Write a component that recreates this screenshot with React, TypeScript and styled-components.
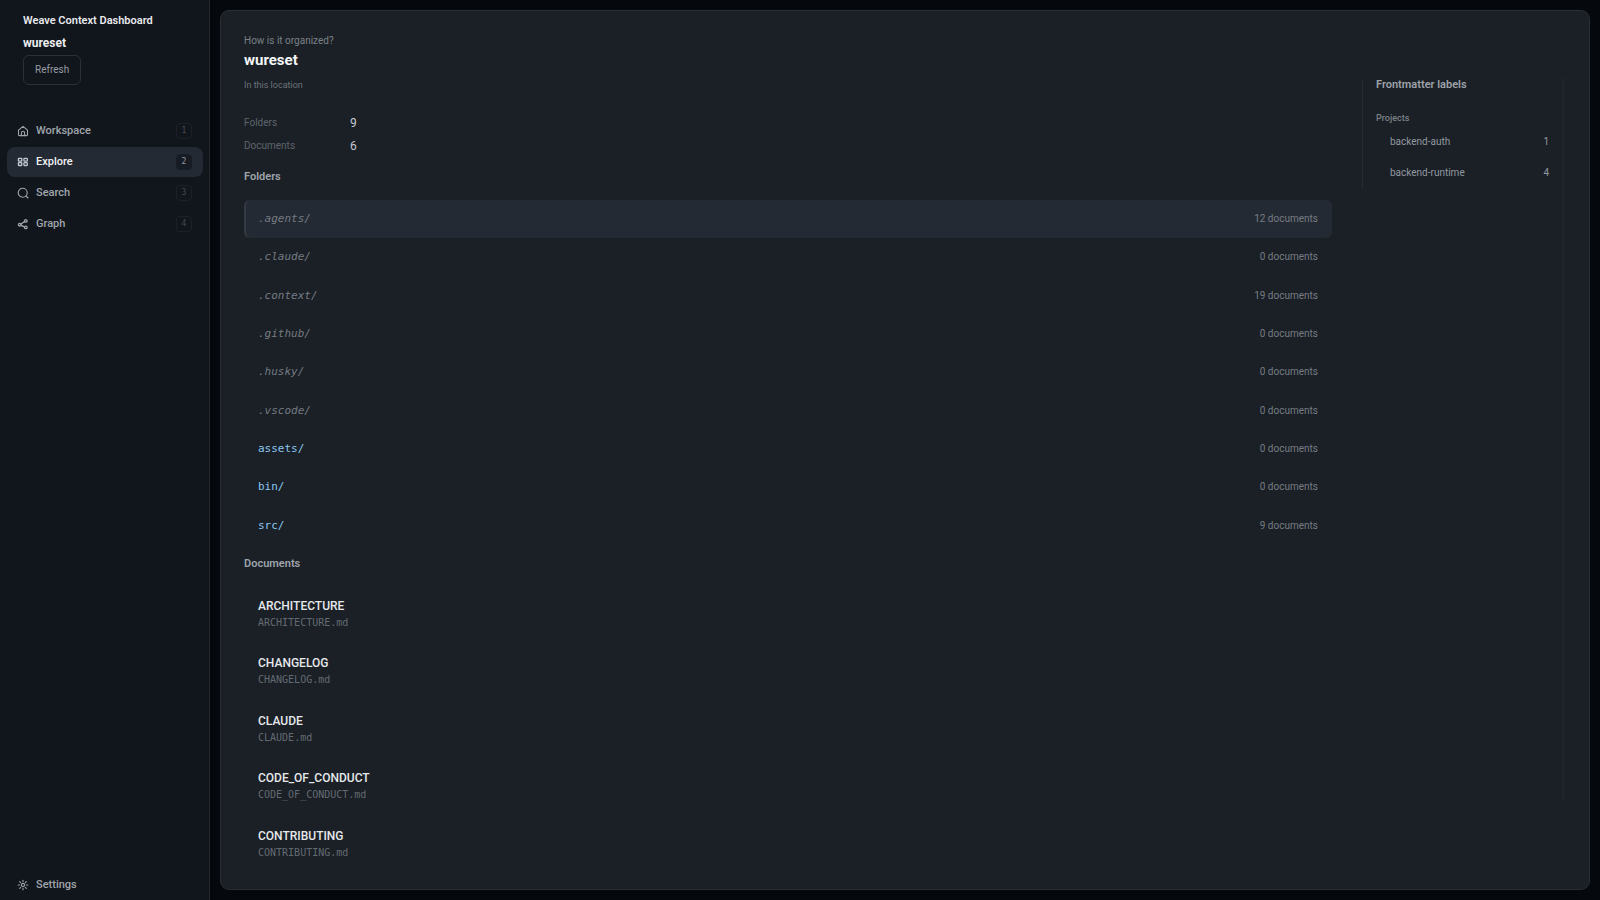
import React from "react";
import styled, { createGlobalStyle, css } from "styled-components";

const sans = `Roboto, "Liberation Sans", sans-serif`;
const mono = `"DejaVu Sans Mono", monospace`;

const GlobalStyle = createGlobalStyle`
  * { box-sizing: border-box; }
  body { margin: 0; background: #05080d; color: #a0a5ac; font-family: ${sans}; font-size: 12px; line-height: 16px; }
  h1, h2, h3, p, ul, dl, dd { margin: 0; padding: 0; }
  ul { list-style: none; }
  a { color: inherit; text-decoration: none; }
  button { font: inherit; cursor: pointer; }
`;

const Shell = styled.div`
  display: grid;
  grid-template-columns: 210px minmax(0, 1fr);
  height: 100vh;
`;

const Sidebar = styled.aside`
  display: flex;
  flex-direction: column;
  background: #11151c;
  border-right: 1px solid #24272c;
  padding: 13px 6px 0 7px;
`;

const Brand = styled.header`
  padding: 0 16px;
`;

const BrandTitle = styled.p`
  font-size: 11px;
  line-height: 16px;
  font-weight: 600;
  color: #e8eaed;
  white-space: nowrap;
`;

const Project = styled.p`
  margin: 6px 0 4px;
  font-size: 12px;
  line-height: 16px;
  font-weight: 700;
  color: #eceef1;
`;

const RefreshButton = styled.button`
  display: block;
  height: 30px;
  padding: 0 11px;
  border: 1px solid #2c3138;
  border-radius: 6px;
  background: transparent;
  color: #989ca3;
  font-size: 10px;
`;

const Nav = styled.nav`
  display: grid;
  grid-auto-rows: 30px;
  row-gap: 1px;
  margin-top: 31px;
`;

const NavLink = styled.a<{ $active?: boolean }>`
  display: flex;
  align-items: center;
  height: 30px;
  padding: 0 11px 0 10px;
  gap: 7px;
  border-radius: 8px;
  font-size: 11px;
  font-weight: 500;
  ${(p) => p.$active && css`
    background: #232a33;
    color: #f0f2f5;
    svg { color: #c3c8d0; }
  `}
`;

const Key = styled.kbd<{ $active?: boolean }>`
  margin-left: auto;
  width: 16px;
  height: 16px;
  border: 1px solid #1d2127;
  border-radius: 4px;
  font: 8px/14px ${mono};
  text-align: center;
  color: #454a52;
  ${(p) => p.$active && css`
    background: #171c24;
    border-color: #171c24;
    color: #9196a0;
  `}
`;

const SidebarFooter = styled.div`
  margin-top: auto;
`;

const Panel = styled.main`
  margin: 10px;
  padding: 23px 24px 0 23px;
  background: #1a2026;
  border: 1px solid #2a2e34;
  border-radius: 9px;
  overflow: hidden;
`;

const Eyebrow = styled.p`
  font-size: 10px;
  line-height: 14px;
  color: #7b8087;
`;

const Title = styled.h1`
  margin: 2px 0 8px;
  font-size: 15px;
  line-height: 20px;
  font-weight: 700;
  color: #f4f5f7;
`;

const Columns = styled.div`
  display: grid;
  grid-template-columns: minmax(0, 1fr) 203px;
  column-gap: 30px;
`;

const Caption = styled.p`
  font-size: 9px;
  line-height: 14px;
  color: #6d727a;
`;

const Stats = styled.dl`
  display: grid;
  grid-template-columns: 106px 1fr;
  row-gap: 7px;
  margin-top: 23px;
  line-height: 16px;
  dt { font-size: 10px; color: #5f646c; }
  dd { font-size: 12px; color: #c5c9cf; }
`;

const SectionTitle = styled.h2`
  font-size: 11px;
  line-height: 16px;
  font-weight: 600;
  color: #9ea3aa;
`;

const FoldersTitle = styled(SectionTitle)`
  margin: 15px 0;
`;

const DocumentsTitle = styled(SectionTitle)`
  margin: 11px 0 26px;
`;

const FolderList = styled.ul`
  display: grid;
  grid-auto-rows: 1fr;
  min-height: 345px;
`;

const FolderItem = styled.li`
  display: grid;
`;

const FolderLink = styled.a<{ $selected?: boolean }>`
  display: flex;
  align-items: center;
  justify-content: space-between;
  padding: 0 14px 0 12px;
  border-left: 2px solid transparent;
  border-radius: 6px;
  ${(p) => p.$selected && css`
    background: #242a33;
    border-left-color: #343a43;
  `}
`;

const FolderName = styled.span<{ $hidden: boolean }>`
  font-family: ${mono};
  font-size: 11px;
  font-style: ${(p) => (p.$hidden ? "italic" : "normal")};
  color: ${(p) => (p.$hidden ? "#757a82" : "#8ac6f0")};
`;

const FolderCount = styled.span`
  font-size: 10px;
  color: #777c84;
`;

const DocumentList = styled.ul`
  display: grid;
  grid-auto-rows: 1fr;
  min-height: 287px;
`;

const DocumentLink = styled.a`
  display: block;
  padding: 0 14px;
`;

const DocumentName = styled.span`
  display: block;
  font-size: 12px;
  line-height: 17px;
  font-weight: 500;
  color: #e6e8eb;
`;

const DocumentPath = styled.span`
  display: block;
  font-family: ${mono};
  font-size: 10px;
  line-height: 15px;
  color: #646a72;
`;

const Rail = styled.aside`
  height: 723px;
  border-right: 4px solid #1d2329;
`;

const Labels = styled.section`
  display: flow-root;
  height: 109px;
  margin-top: 2px;
  padding: 0 12px 0 13px;
  border-left: 1px solid #272b31;
`;

const LabelsTitle = styled(SectionTitle)`
  margin-top: -3px;
`;

const GroupTitle = styled.h3`
  margin: 17px 0 1px;
  font-size: 9px;
  line-height: 16px;
  font-weight: 500;
  color: #7b8087;
`;

const LabelLink = styled.a`
  display: flex;
  justify-content: space-between;
  padding: 7px 0 8px 14px;
  font-size: 10px;
  line-height: 16px;
  color: #9298a0;
`;

const Icon = ({ children }: { children: React.ReactNode }) => (
  <svg width="12" height="12" viewBox="0 0 12 12" fill="none" stroke="currentColor" strokeWidth="1.1" strokeLinecap="round" strokeLinejoin="round" aria-hidden="true">
    {children}
  </svg>
);

const icons = {
  home: <Icon><path d="M1.5 5.2 6 1.4l4.5 3.8v4.5a.9.9 0 0 1-.9.9H2.4a.9.9 0 0 1-.9-.9z" /><path d="M4.4 10.6V7.9a1.6 1.6 0 0 1 3.2 0v2.7" /></Icon>,
  explore: <Icon><g strokeWidth="1.3"><rect x="1.4" y="2.3" width="3.4" height="2.9" rx=".5" /><rect x="6.9" y="2.3" width="3.4" height="2.9" rx=".8" /><rect x="1.4" y="6.6" width="3.4" height="2.9" rx=".5" /><rect x="6.9" y="6.6" width="3.4" height="2.9" rx=".8" /></g></Icon>,
  search: <Icon><circle cx="5.7" cy="5.7" r="4.5" /><path d="m9 9 2 2" /></Icon>,
  graph: <Icon><g strokeWidth="1.3"><circle cx="2.7" cy="6.7" r="1.3" /><circle cx="8.8" cy="2.9" r="1.3" /><circle cx="8.8" cy="9.4" r="1.3" /><path d="m3.9 6 3.7-2.4M4 7.3l3.5 1.6" /></g></Icon>,
  settings: <Icon><circle cx="6" cy="6" r="1.6" /><path d="M6 1.2v1.4M6 9.4v1.4M1.2 6h1.4M9.4 6h1.4M2.7 2.7l1 1M8.3 8.3l1 1M9.3 2.7l-1 1M3.7 8.3l-1 1" /></Icon>,
};

const views = [
  { name: "Workspace", icon: icons.home },
  { name: "Explore", icon: icons.explore },
  { name: "Search", icon: icons.search },
  { name: "Graph", icon: icons.graph },
];

const folders: [string, number][] = [
  [".agents/", 12], [".claude/", 0], [".context/", 19], [".github/", 0], [".husky/", 0],
  [".vscode/", 0], ["assets/", 0], ["bin/", 0], ["src/", 9],
];

const documents = ["ARCHITECTURE", "CHANGELOG", "CLAUDE", "CODE_OF_CONDUCT", "CONTRIBUTING"];

const labels: [string, number][] = [["backend-auth", 1], ["backend-runtime", 4]];

export default function App() {
  return (
    <>
      <GlobalStyle />
      <Shell>
        <Sidebar>
          <Brand>
            <BrandTitle>Weave Context Dashboard</BrandTitle>
            <Project>wureset</Project>
            <RefreshButton type="button">Refresh</RefreshButton>
          </Brand>
          <Nav aria-label="Views">
            {views.map((v, i) => (
              <NavLink key={v.name} href="#" $active={i === 1}>
                {v.icon}
                {v.name}
                <Key $active={i === 1}>{i + 1}</Key>
              </NavLink>
            ))}
          </Nav>
          <SidebarFooter>
            <NavLink href="#">{icons.settings}Settings</NavLink>
          </SidebarFooter>
        </Sidebar>
        <Panel>
          <Eyebrow>How is it organized?</Eyebrow>
          <Title>wureset</Title>
          <Columns>
            <section>
              <Caption>In this location</Caption>
              <Stats>
                <dt>Folders</dt><dd>9</dd>
                <dt>Documents</dt><dd>6</dd>
              </Stats>
              <FoldersTitle>Folders</FoldersTitle>
              <FolderList>
                {folders.map(([name, count], i) => (
                  <FolderItem key={name}>
                    <FolderLink href="#" $selected={i === 0}>
                      <FolderName $hidden={name.startsWith(".")}>{name}</FolderName>
                      <FolderCount>{count} documents</FolderCount>
                    </FolderLink>
                  </FolderItem>
                ))}
              </FolderList>
              <DocumentsTitle>Documents</DocumentsTitle>
              <DocumentList>
                {documents.map((name) => (
                  <li key={name}>
                    <DocumentLink href="#">
                      <DocumentName>{name}</DocumentName>
                      <DocumentPath>{name}.md</DocumentPath>
                    </DocumentLink>
                  </li>
                ))}
              </DocumentList>
            </section>
            <Rail>
              <Labels>
                <LabelsTitle>Frontmatter labels</LabelsTitle>
                <GroupTitle>Projects</GroupTitle>
                <ul>
                  {labels.map(([name, count]) => (
                    <li key={name}>
                      <LabelLink href="#"><span>{name}</span><span>{count}</span></LabelLink>
                    </li>
                  ))}
                </ul>
              </Labels>
            </Rail>
          </Columns>
        </Panel>
      </Shell>
    </>
  );
}
